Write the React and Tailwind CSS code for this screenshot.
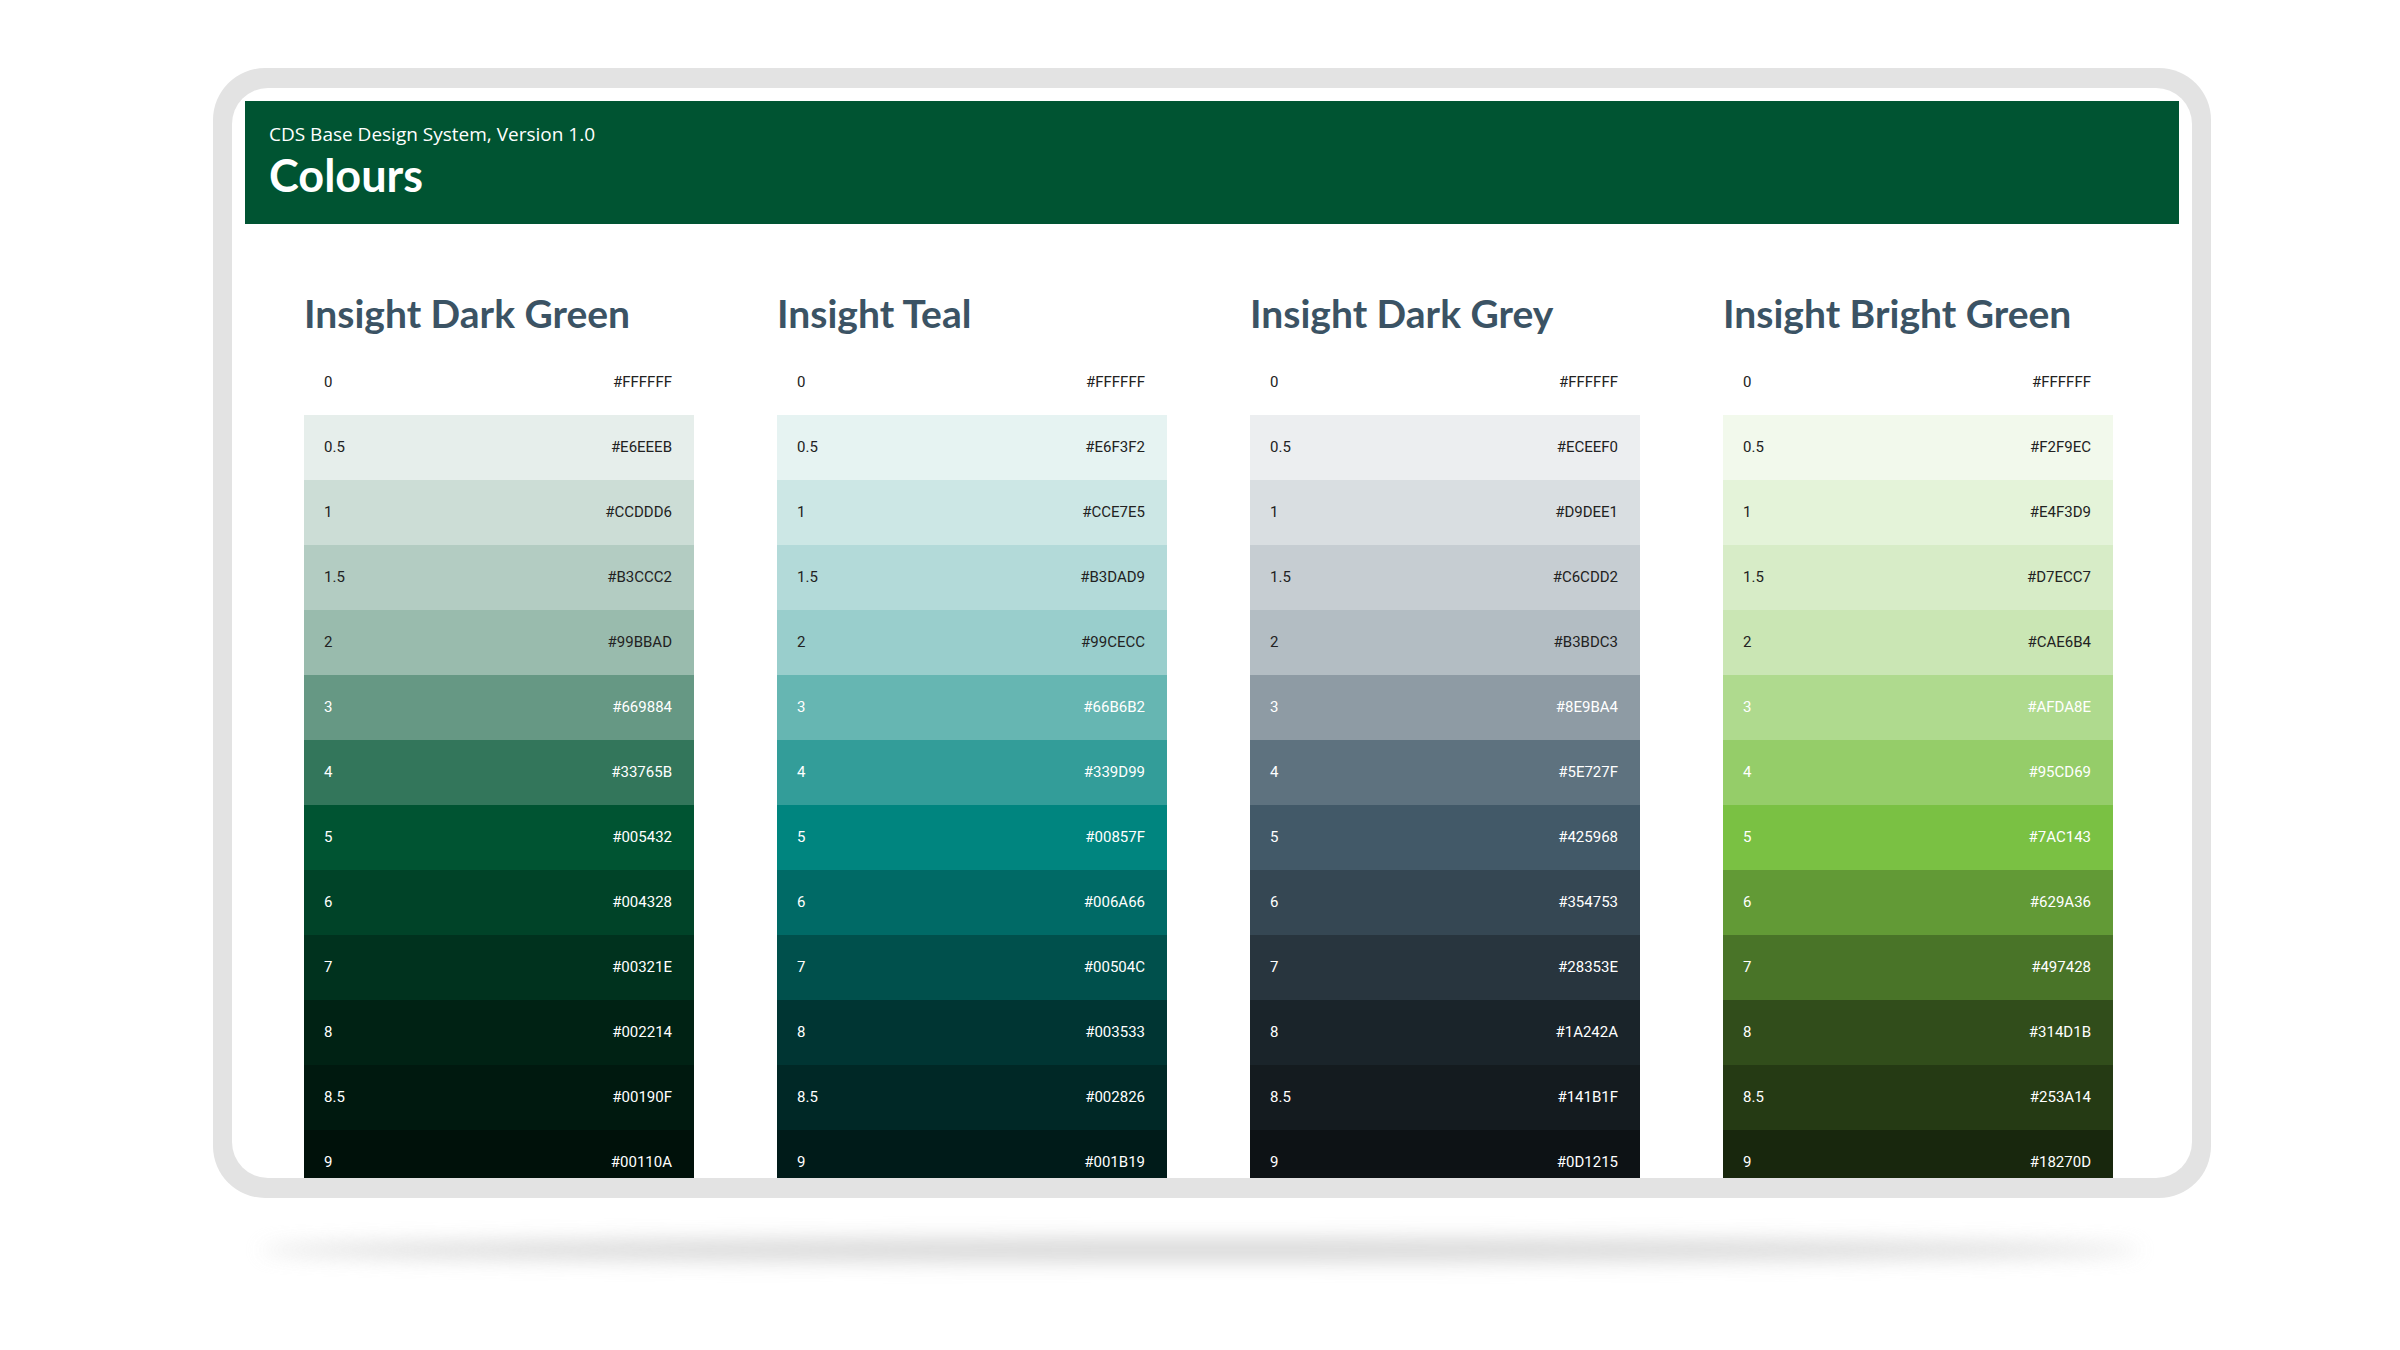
const steps = ["0","0.5","1","1.5","2","3","4","5","6","7","8","8.5","9"];
const palettes = [
  { name: "Insight Dark Green", c: ["#FFFFFF","#E6EEEB","#CCDDD6","#B3CCC2","#99BBAD","#669884","#33765B","#005432","#004328","#00321E","#002214","#00190F","#00110A"] },
  { name: "Insight Teal", c: ["#FFFFFF","#E6F3F2","#CCE7E5","#B3DAD9","#99CECC","#66B6B2","#339D99","#00857F","#006A66","#00504C","#003533","#002826","#001B19"] },
  { name: "Insight Dark Grey", c: ["#FFFFFF","#ECEEF0","#D9DEE1","#C6CDD2","#B3BDC3","#8E9BA4","#5E727F","#425968","#354753","#28353E","#1A242A","#141B1F","#0D1215"] },
  { name: "Insight Bright Green", c: ["#FFFFFF","#F2F9EC","#E4F3D9","#D7ECC7","#CAE6B4","#AFDA8E","#95CD69","#7AC143","#629A36","#497428","#314D1B","#253A14","#18270D"] },
];

export default function App() {
  return (
    <div className="w-[2400px] h-[1350px] bg-white relative overflow-hidden" style={{ fontFamily: "Lato, 'Open Sans', sans-serif" }}>
      <div className="absolute left-[260px] right-[260px] top-[1238px] h-[24px] rounded-[50%] bg-[#cfcfcf] blur-[10px] opacity-80" />
      <div className="relative ml-[213px] mt-[68px] w-[1998px] h-[1130px] bg-[#e3e3e3] rounded-[52px] px-[19px] py-[20px]">
        <div className="w-full h-full bg-white rounded-[36px] overflow-hidden p-[13px]">
          <div className="h-[123px] bg-[#005432] pl-[24px] pt-[21px] text-white">
            <div className="text-[19px] leading-[24px]" style={{ fontFamily: "'Open Sans', sans-serif" }}>CDS Base Design System, Version 1.0</div>
            <div className="text-[45px] font-bold leading-[54px] mt-[2px]">Colours</div>
          </div>
          <div className="flex gap-[83px] pl-[59px] pt-[70px]">
            {palettes.map((p) => (
              <div key={p.name} className="w-[390px]">
                <div className="text-[39px] font-bold leading-[38px] text-[#3b5364] h-[38px] whitespace-nowrap">{p.name}</div>
                <div className="mt-[18px]">
                  {p.c.map((col, i) => (
                    <div key={i} className={"h-[65px] flex items-center justify-between pl-[20px] pr-[22px] text-[15px] " + (i >= 5 ? "text-white" : "text-[#222]")} style={{ backgroundColor: col, fontFamily: "Roboto, sans-serif" }}>
                      <span>{steps[i]}</span>
                      <span>{col}</span>
                    </div>
                  ))}
                </div>
              </div>
            ))}
          </div>
        </div>
      </div>
    </div>
  );
}
